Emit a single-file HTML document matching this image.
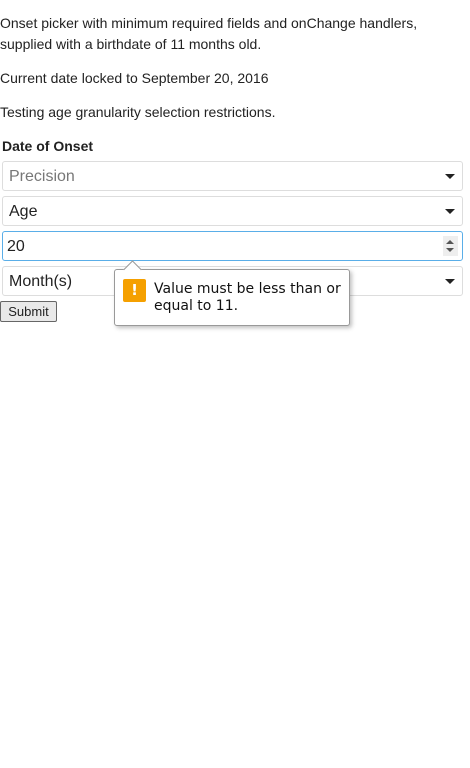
<!DOCTYPE html>
<html><head><style>
body{margin:0;font-family:"Liberation Sans",sans-serif;font-size:14px;color:#222;background:#fff;width:470px;height:768px;position:relative;overflow:hidden}
p{margin:0;position:absolute;left:0;line-height:21px}
.lbl{position:absolute;left:2px;top:138px;font-weight:bold;font-size:14px}
.f{position:absolute;left:2px;width:459px;height:28px;border:1px solid #ddd;border-radius:3px;font-size:16px;line-height:30px;box-sizing:content-box}
.f span{position:absolute;left:6px}
.car{position:absolute;right:7px;top:12px;width:0;height:0;border-left:5px solid transparent;border-right:5px solid transparent;border-top:5px solid #222}
.btn{position:absolute;left:0;top:301px;width:55px;height:19px;border:1px solid #666;border-radius:2px;background:#e9e9e9;font-size:13px;line-height:20px;text-align:center}
.tip{position:absolute;left:114px;top:269px;width:234px;height:55px;border:1px solid #999;border-radius:3px;background:#fff;box-shadow:2px 2px 4px rgba(0,0,0,.25);font-family:"DejaVu Sans",sans-serif;font-size:14px;color:#111}
</style></head><body>
<p style="top:13px">Onset picker with minimum required fields and onChange handlers,<br>supplied with a birthdate of 11 months old.</p>
<p style="top:68px">Current date locked to September 20, 2016</p>
<p style="top:102px">Testing age granularity selection restrictions.</p>
<div class="lbl">Date of Onset</div>
<div class="f" style="top:161px;color:#777"><span>Precision</span><div class="car"></div></div>
<div class="f" style="top:196px"><span>Age</span><div class="car"></div></div>
<div class="f" style="top:231px;border-color:#5aaee8"><span style="left:4px">20</span>
<div style="position:absolute;right:4px;top:4px;width:15px;height:20px;background:#eee"></div>
<div style="position:absolute;right:8px;top:8px;border-left:4px solid transparent;border-right:4px solid transparent;border-bottom:4px solid #555"></div>
<div style="position:absolute;right:8px;top:16px;border-left:4px solid transparent;border-right:4px solid transparent;border-top:4px solid #555"></div></div>
<div class="f" style="top:266px"><span>Month(s)</span><div class="car"></div></div>
<div class="btn">Submit</div>
<div class="tip">
<div style="position:absolute;left:11px;top:-7px;width:12px;height:12px;background:#fff;border-left:1px solid #999;border-top:1px solid #999;transform:rotate(45deg)"></div>
<div style="position:absolute;left:8px;top:9px;width:23px;height:23px;background:#f5a000;border-radius:2px;color:#fff;font-weight:bold;text-align:center;line-height:23px;font-size:15px">!</div>
<div style="position:absolute;left:39px;top:11px;line-height:17px">Value must be less than or<br>equal to 11.</div>
</div>
</body></html>
